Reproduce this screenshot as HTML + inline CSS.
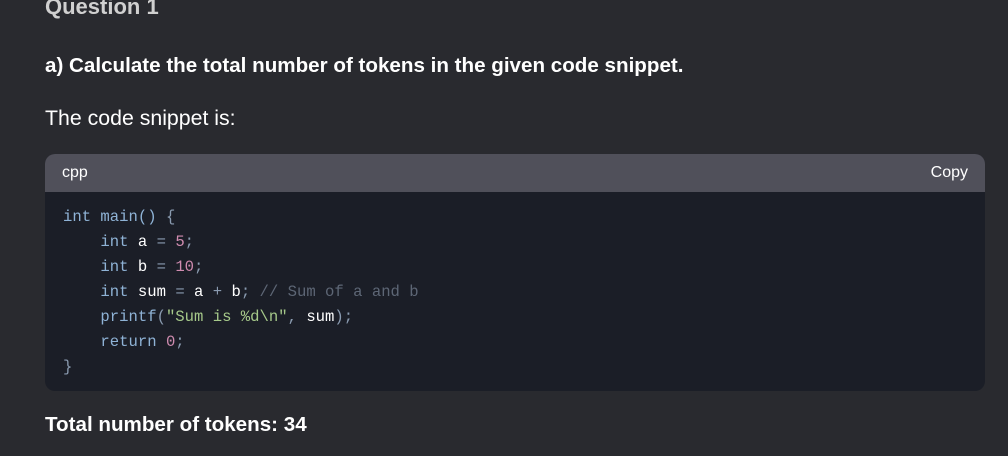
<!DOCTYPE html>
<html><head><style>
body{margin:0;width:1008px;height:456px;background:#292a2f;font-family:"Liberation Sans",sans-serif;color:#fff;position:relative;overflow:hidden}
.t{position:absolute;left:45px;white-space:nowrap}
.code{position:absolute;left:45px;top:154px;width:940px;height:237px;border-radius:10px;overflow:hidden;background:#1b1e27}
.hd{height:38px;background:#50505a;font-size:16px;color:#fff;position:relative}
.hd span{position:absolute;top:10px}
pre{margin:0;position:absolute;left:18px;top:51px;font-family:"Liberation Mono",monospace;font-size:15.6px;line-height:25px;color:#8fb3d6}
.w{color:#fff}.n{color:#d08cb0}.c{color:#5d6675}.s{color:#a6c98a}.p{color:#8a9bb0}
</style></head><body>
<div class="t" style="top:-6px;font-size:22px;font-weight:bold;color:#d0d0d0">Question 1</div>
<div class="t" style="top:54px;font-size:20.6px;font-weight:bold">a) Calculate the total number of tokens in the given code snippet.</div>
<div class="t" style="top:106px;font-size:21.3px">The code snippet is:</div>
<div class="code"><div class="hd"><span style="left:17px">cpp</span><span style="right:17px">Copy</span></div>
<pre>int main() <span class="p">{</span>
    int <span class="w">a</span> <span class="p">=</span> <span class="n">5</span><span class="p">;</span>
    int <span class="w">b</span> <span class="p">=</span> <span class="n">10</span><span class="p">;</span>
    int <span class="w">sum</span> <span class="p">=</span> <span class="w">a</span> <span class="p">+</span> <span class="w">b</span><span class="p">;</span> <span class="c">// Sum of a and b</span>
    printf<span class="p">(</span><span class="s">"Sum is %d\n"</span><span class="p">,</span> <span class="w">sum</span><span class="p">);</span>
    return <span class="n">0</span><span class="p">;</span>
<span class="p">}</span></pre></div>
<div class="t" style="top:413px;font-size:20.6px;font-weight:bold">Total number of tokens: 34</div>
</body></html>
